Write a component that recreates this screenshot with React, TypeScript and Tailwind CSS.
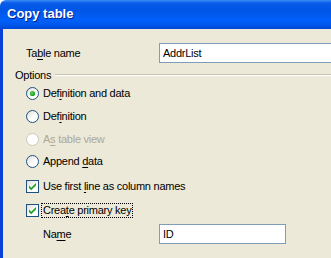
import React from 'react';

const font = "font-['Liberation_Sans',Arial,sans-serif] text-[11px] tracking-[-0.25px]";

// XP style label with one underlined mnemonic letter
const Label: React.FC<{ text: string; at: number; disabled?: boolean; focus?: boolean }> = ({ text, at, disabled, focus }) => (
  <span
    className={`${disabled ? 'text-[#ACA899]' : 'text-black'} leading-[13px] ${focus ? 'outline-1 outline-dotted outline-black px-[1px] -ml-[1px]' : ''}`}
  >
    {text.slice(0, at)}
    <span className="underline underline-offset-[2px]">{text[at]}</span>
    {text.slice(at + 1)}
  </span>
);

const Radio: React.FC<{ checked?: boolean; disabled?: boolean }> = ({ checked, disabled }) => (
  <svg width="13" height="13" viewBox="0 0 13 13" className="shrink-0">
    <defs>
      <linearGradient id={disabled ? 'rgd' : 'rg'} x1="0" y1="0" x2="1" y2="1">
        <stop offset="0" stopColor={disabled ? '#FFFFFF' : '#DCDBD3'} />
        <stop offset="0.6" stopColor="#FFFFFF" />
      </linearGradient>
      <radialGradient id="dot" cx="0.4" cy="0.4" r="0.6">
        <stop offset="0" stopColor="#5DD35D" />
        <stop offset="1" stopColor="#1A9A1A" />
      </radialGradient>
    </defs>
    <circle cx="6.5" cy="6.5" r="6" fill={`url(#${disabled ? 'rgd' : 'rg'})`} stroke={disabled ? '#CAC8BB' : '#1C5180'} strokeWidth="1" />
    {checked && <circle cx="6.5" cy="6.5" r="2.6" fill="url(#dot)" />}
  </svg>
);

const Check: React.FC = () => (
  <svg width="13" height="13" viewBox="0 0 13 13" className="shrink-0">
    <defs>
      <linearGradient id="cg" x1="0" y1="0" x2="1" y2="1">
        <stop offset="0" stopColor="#DCDBD3" />
        <stop offset="0.6" stopColor="#FFFFFF" />
      </linearGradient>
    </defs>
    <rect x="0.5" y="0.5" width="12" height="12" fill="url(#cg)" stroke="#1C5180" />
    <path d="M3 5.5 L5.2 7.8 L10 3 L10 5.4 L5.2 10.2 L3 8 Z" fill="#21A121" />
  </svg>
);

const Row: React.FC<{ h: string; children: React.ReactNode }> = ({ h, children }) => (
  <div className={`flex items-center gap-[4px] pl-[23px] ${h}`}>{children}</div>
);

export default function App() {
  return (
    <div className={`w-[331px] h-[258px] overflow-hidden flex flex-col ${font}`}>
      <div className="h-[29px] shrink-0 rounded-tl-[6px] bg-[linear-gradient(to_bottom,#3C8CF3_0px,#0A5CEA_3px,#0055E5_10px,#0060FA_20px,#0057EC_25px,#0046D3_29px)] flex items-center pl-[7px] pb-[1px]">
        <span className="font-['Liberation_Sans',Arial,sans-serif] font-bold text-[13px] tracking-normal text-white [text-shadow:1px_1px_0_#0A1E8A]">
          Copy table
        </span>
      </div>
      <div className="flex-1 bg-[#ECE9D8] border-l-[3px] border-[#0841D6] flex flex-col">
        <div className="mt-[14px] h-[20px] flex items-center pl-[23px]">
          <div className="w-[133px] shrink-0"><Label text="Table name" at={2} /></div>
          <div className="h-[20px] w-[200px] shrink-0 bg-white border border-[#7F9DB9] flex items-center pl-[3px]">AddrList</div>
        </div>
        <div className="mt-[5px] h-[14px] flex items-center pl-[12px] pr-0">
          <span>Options</span>
          <div className="flex-1 ml-[4px] h-[2px] border-t border-[#C5C2B2] border-b-white bg-transparent border-b" />
        </div>
        <Row h="h-[23px]"><Radio checked /><Label text="Definition and data" at={3} /></Row>
        <Row h="h-[23px]"><Radio /><Label text="Definition" at={3} /></Row>
        <Row h="h-[22px]"><Radio disabled /><Label text="As table view" at={1} disabled /></Row>
        <Row h="h-[22px]"><Radio /><Label text="Append data" at={7} /></Row>
        <div className="mt-[3px]"><Row h="h-[22px]"><Check /><Label text="Use first line as column names" at={10} /></Row></div>
        <div className="mt-[2px]"><Row h="h-[22px]"><Check /><Label text="Create primary key" at={4} focus /></Row></div>
        <div className="mt-[3px] h-[20px] flex items-center pl-[40px]">
          <div className="w-[116px] shrink-0"><Label text="Name" at={2} /></div>
          <div className="h-[20px] w-[127px] shrink-0 bg-white border border-[#7F9DB9] flex items-center pl-[3px]">ID</div>
        </div>
      </div>
    </div>
  );
}
